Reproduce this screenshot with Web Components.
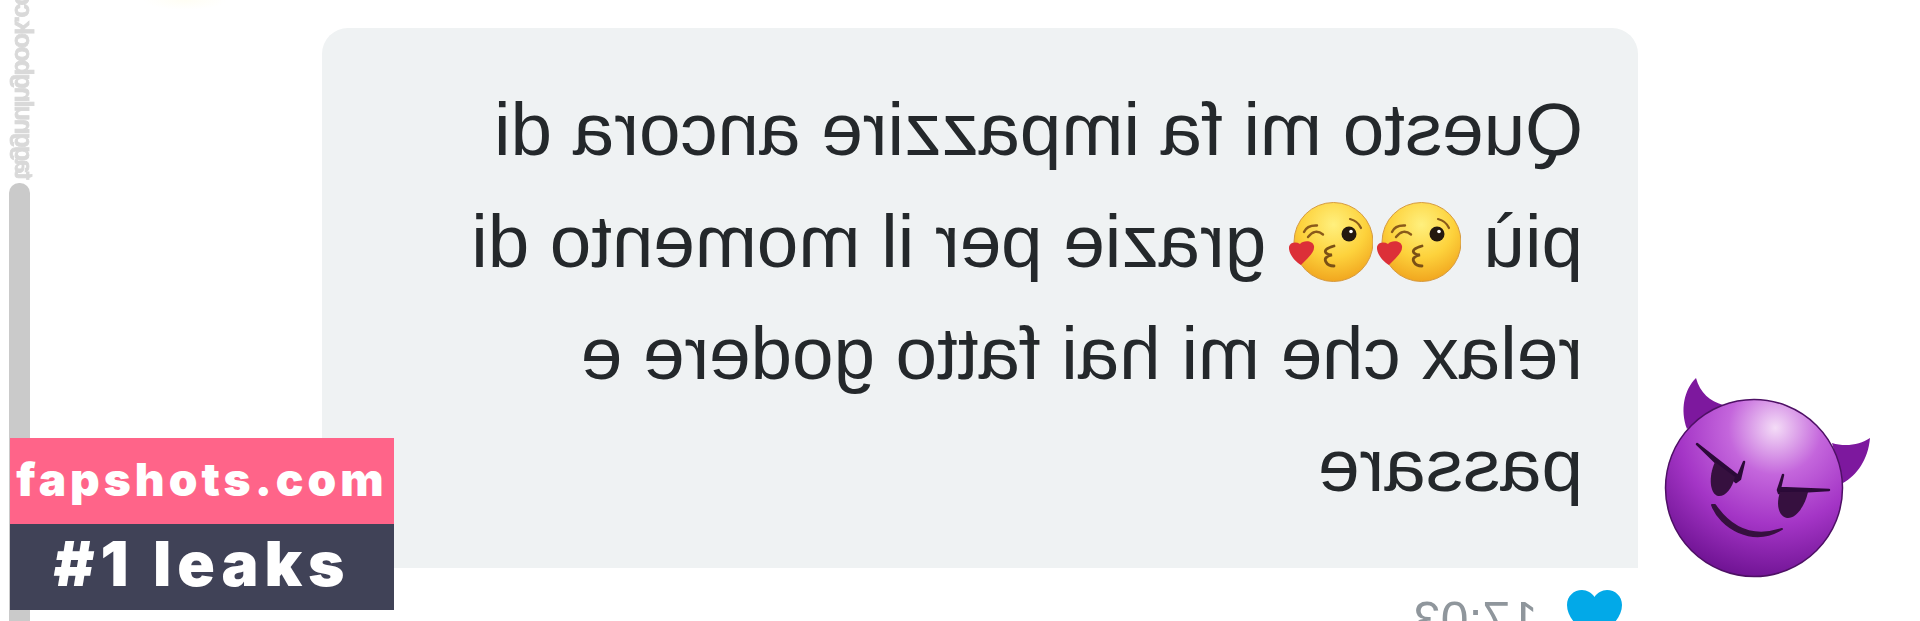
<!DOCTYPE html>
<html lang="it">
<head>
<meta charset="utf-8">
<title>Chat</title>
<style>
  html, body { margin: 0; height: 100%; background: #fff; overflow: hidden; }
  body { font-family: "Liberation Sans", Arial, sans-serif; }
</style>
</head>
<body>

<template id="tpl-chat-view">
  <style>
    :host {
      display: grid; grid-template-columns: 322px 1316px 1fr; height: 621px; position: relative;
      background: radial-gradient(ellipse 42px 10px at 185px 0, #fffef4, #fff);
      overflow: hidden;
    }
    .rail, .main, .side { min-width: 0; }
  </style>
  <div class="rail"><slot name="rail"></slot></div>
  <div class="main"><slot></slot></div>
  <div class="side"><slot name="side"></slot></div>
  <slot name="overlay"></slot>
</template>

<template id="tpl-side-rail">
  <style>
    :host { display: flex; flex-direction: column; height: 621px; padding-left: 9px; box-sizing: border-box; }
    .mark {
      height: 180px; width: 30px; overflow: hidden; display: flex; align-items: flex-end; flex: none;
      font: 700 25px/30px "Liberation Sans", sans-serif; letter-spacing: -1.8px; color: #d9d9d9;
      -webkit-text-stroke: .8px #d9d9d9;
    }
    /* mirrored, runs bottom to top */
    .mark span { display: block; white-space: nowrap; writing-mode: vertical-rl; transform: scaleY(-1); filter: blur(.6px); }
    .bar { flex: 1; width: 21px; background: #cacaca; border-radius: 10px 10px 0 0; margin-top: 3px; }
  </style>
  <div class="mark"><span><slot></slot></span></div>
  <div class="bar"></div>
</template>

<template id="tpl-message-bubble">
  <style>
    :host { display: block; padding-top: 28px; }
    .bubble {
      height: 540px; box-sizing: border-box; background: #eff2f3; border-radius: 26px 26px 0 0;
      padding: 46px 0 0 55px;
      color: #24282b; font-size: 74.5px; line-height: 112px; white-space: nowrap;
      transform: scaleX(-1);
    }
    .inner { filter: blur(.4px); }
    .time-row {
      display: flex; align-items: flex-start; gap: 29px; height: 53px; overflow: hidden;
      padding: 22px 0 0 16px; box-sizing: border-box; transform: scaleX(-1);
      color: #8f969c; font-size: 50px; line-height: 56px;
    }
    .time-row span { display: block; margin-top: 2px; filter: blur(.5px); }
    .time-row svg { display: block; flex: none; width: 55px; height: 50px; }
  </style>
  <div class="bubble"><div class="inner"><slot></slot></div></div>
  <div class="time-row">
    <svg viewBox="0 0 55 50" aria-hidden="true"><path d="M27.5 50C14 40 0 29 0 15 0 6 7 0 15 0c5 0 10 3 12.5 7C30 3 35 0 40 0c8 0 15 6 15 15 0 14-14 25-27.500 35z" fill="#02a9e8"/></svg>
    <span><slot name="meta"></slot></span>
  </div>
</template>

<template id="tpl-kiss-emoji">
  <style>
    :host { display: inline-block; width: 84px; height: 80px; vertical-align: -15px; margin: 0 2px; }
    svg { display: block; width: 100%; height: 100%; transform: scaleX(-1); }
  </style>
  <svg viewBox="0 0 84 80" aria-hidden="true">
    <defs>
      <radialGradient id="k" cx="50%" cy="28%" r="75%">
        <stop offset="0" stop-color="#fff07e"/><stop offset=".55" stop-color="#fdd23c"/><stop offset="1" stop-color="#f0a21c"/>
      </radialGradient>
    </defs>
    <ellipse cx="44.5" cy="40" rx="39.5" ry="39.5" fill="url(#k)" stroke="#d59a40" stroke-width="1"/>
    <circle cx="60" cy="32" r="7.5" fill="#24180f"/>
    <circle cx="62" cy="29.5" r="1.8" fill="#fff"/>
    <path d="M61 17q8 2 11 9" fill="none" stroke="#8a5a1a" stroke-width="2.2" stroke-linecap="round"/>
    <path d="M15 30q3-7 13-6.500M19 35q7-9 15-2.500" fill="none" stroke="#8a5a1a" stroke-width="2.4" stroke-linecap="round"/>
    <path d="M45 44q-11 3-8 7 2 2 6 2-9 2-6 7 2 4 8 4" fill="none" stroke="#7a5016" stroke-width="2.8" stroke-linecap="round"/>
    <path d="M0 47c-1-6 6-8 11-5 3-4 13-4 14 2 1 6-6 12-13 19-5-3-11-9-12-16z" fill="#dc2f38"/>
  </svg>
</template>

<template id="tpl-devil-emoji">
  <style>
    :host { display: block; width: 215px; height: 210px; margin: 375px 0 0 22px; }
    svg { display: block; width: 100%; height: 100%; overflow: visible; }
  </style>
  <svg viewBox="0 0 215 210" aria-hidden="true">
    <defs>
      <radialGradient id="d" cx="62%" cy="16%" r="88%">
        <stop offset="0" stop-color="#f4dcf7"/><stop offset=".3" stop-color="#c466dc"/><stop offset=".62" stop-color="#a435c6"/><stop offset="1" stop-color="#6c1190"/>
      </radialGradient>
    </defs>
    <path d="M27 54C20 35 24 15 36 3c4 15 14 23 27 27z" fill="#7d189e"/>
    <path d="M172 68c13 4 28 2 38-5-2 22-13 37-27 45z" fill="#7d189e"/>
    <circle cx="94" cy="113" r="88.5" fill="url(#d)" stroke="#4e1065" stroke-width="1.5"/>
    <path d="M37 69l41 32 6-14-4 17-4 3z" fill="#2b0a38" stroke="#2b0a38" stroke-width="2.5" stroke-linejoin="round"/>
    <path d="M55 87l20 15c-3 12-10 20-17 19-8-2-10-19-3-34z" fill="#36103f"/>
    <path d="M169 115l-49-2 3-13-5 15 1 3z" fill="#2b0a38" stroke="#2b0a38" stroke-width="2.5" stroke-linejoin="round"/>
    <path d="M120 117h28c-3 14-12 27-21 26-9-2-11-14-7-26z" fill="#36103f"/>
    <path d="M52 130c8 22 40 42 70 24-30 10-52-2-67-24z" fill="#36103f" stroke="#36103f" stroke-width="2" stroke-linejoin="round"/>
  </svg>
</template>

<template id="tpl-promo-badge">
  <style>
    :host { display: block; position: absolute; left: 10px; top: 438px; width: 384px; font-family: Inter, "Liberation Sans", sans-serif; font-weight: 900; color: #fff; text-align: center; }
    .top { height: 86px; background: #ff6489; font-size: 46px; line-height: 82px; letter-spacing: 4px; white-space: nowrap; }
    .bottom { height: 86px; background: #404257; font-size: 62px; line-height: 80px; letter-spacing: 6px; white-space: nowrap; }
  </style>
  <div class="top"><slot name="site"></slot></div>
  <div class="bottom"><slot name="tag"></slot></div>
</template>

<script>
  class TemplatedElement extends HTMLElement {
    constructor(tplId) {
      super();
      this.attachShadow({ mode: 'open' });
      this.shadowRoot.appendChild(document.getElementById(tplId).content.cloneNode(true));
    }
  }
  customElements.define('chat-view',      class extends TemplatedElement { constructor() { super('tpl-chat-view'); } });
  customElements.define('side-rail',      class extends TemplatedElement { constructor() { super('tpl-side-rail'); } });
  customElements.define('message-bubble', class extends TemplatedElement { constructor() { super('tpl-message-bubble'); } });
  customElements.define('kiss-emoji',     class extends TemplatedElement { constructor() { super('tpl-kiss-emoji'); } });
  customElements.define('devil-emoji',    class extends TemplatedElement { constructor() { super('tpl-devil-emoji'); } });
  customElements.define('promo-badge',    class extends TemplatedElement { constructor() { super('tpl-promo-badge'); } });
</script>

<chat-view>
  <side-rail slot="rail">taggnulngbook.co</side-rail>
  <message-bubble>
    Questo mi fa impazzire ancora di<br>
    più <kiss-emoji></kiss-emoji><kiss-emoji></kiss-emoji> grazie per il momento di<br>
    relax che mi hai fatto godere e<br>
    passare
    <span slot="meta">17:03</span>
  </message-bubble>
  <devil-emoji slot="side"></devil-emoji>
  <promo-badge slot="overlay">
    <span slot="site">fapshots.com</span>
    <span slot="tag">#1 leaks</span>
  </promo-badge>
</chat-view>

</body>
</html>
